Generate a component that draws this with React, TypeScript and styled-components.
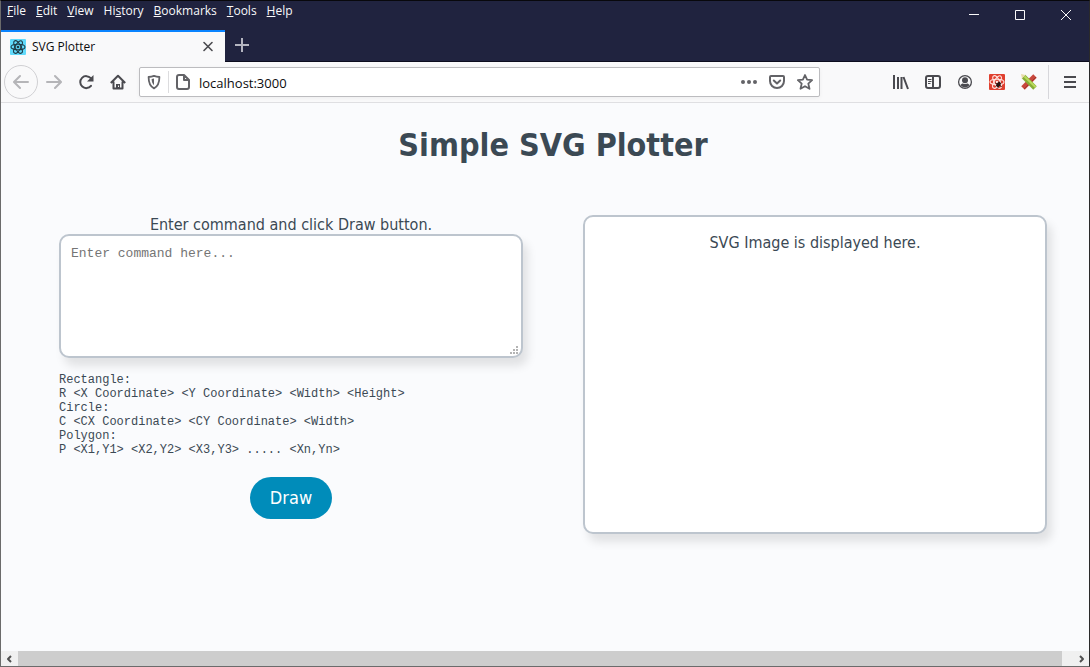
import React, { useState } from "react";
import styled, { createGlobalStyle } from "styled-components";

const ui = `"Open Sans", "Noto Sans", sans-serif`;
const body = `"DejaVu Sans Condensed", "DejaVu Sans", sans-serif`;
const mono = `"Liberation Mono", monospace`;

const GlobalStyle = createGlobalStyle`
  *, *::before, *::after { box-sizing: border-box; }
  body { margin: 0; background: #fafbfd; }
  button { border: 0; padding: 0; background: none; color: inherit; font: inherit; }
`;

const Window = styled.div`
  display: flex;
  flex-direction: column;
  min-height: 100vh;
  border: 1px solid #6b6b6b;
  border-top-color: #08080c;
  border-right-color: #2a2a2a;
  background: #fafbfd;
`;

const TitleBar = styled.header`
  display: flex;
  justify-content: space-between;
  align-items: flex-start;
  height: 29px;
  background: #20233f;
  color: #f9f9fa;
`;

const MenuBar = styled.nav`
  display: flex;
  gap: 10px;
  padding: 2px 6px 0;
`;

const MenuButton = styled.button`
  font: 12px/16px ${ui};
  u { text-underline-offset: 1px; }
`;

const WindowControls = styled.div`
  display: flex;
`;

const WindowButton = styled.button`
  display: grid;
  place-items: center;
  width: 46px;
  height: 28px;
`;

const TabStrip = styled.div`
  display: flex;
  height: 32px;
  background: #20233f;
  border-bottom: 1px solid #0c0c1e;
`;

const Tab = styled.div`
  display: flex;
  align-items: center;
  gap: 6px;
  width: 224px;
  margin-bottom: -1px;
  padding: 0 9px;
  border-top: 2px solid #0a84ff;
  background: #f9f9fa;
  font: 12px/16px ${ui};
  color: #0c0c0d;
`;

const TabTitle = styled.span`
  flex: 1;
`;

const SmallButton = styled.button`
  display: grid;
  place-items: center;
  width: 16px;
  height: 16px;
  color: #4a4a4f;
`;

const NewTab = styled.button`
  display: grid;
  place-items: center;
  width: 34px;
  height: 29px;
  color: #b4b5c0;
`;

const Toolbar = styled.div`
  display: flex;
  align-items: center;
  height: 41px;
  padding: 0 3px;
  border-bottom: 1px solid #dfdfe2;
  background: #f9f9fa;
`;

const ToolButton = styled.button<{ $muted?: boolean }>`
  display: grid;
  place-items: center;
  width: 32px;
  height: 32px;
  color: ${(p) => (p.$muted ? "#b5b5b8" : "#4a4a4f")};
`;

const BackButton = styled(ToolButton)`
  width: 34px;
  height: 34px;
  border: 1px solid #d0d0d3;
  border-radius: 50%;
`;

const AddressBar = styled.div`
  display: flex;
  align-items: center;
  flex: 1;
  height: 30px;
  margin: 0 65px 0 5px;
  border: 1px solid #bcbcbf;
  border-radius: 2px;
  background: #fff;
  color: #636367;
  box-shadow: 0 1px 4px rgba(0, 0, 0, 0.05);
`;

const AddressButton = styled.button`
  display: grid;
  place-items: center;
  width: 28px;
  height: 28px;
`;

const AddressDivider = styled.span`
  width: 1px;
  height: 22px;
  background: #dcdcde;
`;

const AddressInput = styled.input`
  flex: 1;
  min-width: 0;
  padding: 2px 2px 0;
  border: 0;
  outline: 0;
  background: none;
  font: 13px/20px ${ui};
  color: #0c0c0d;
`;

const ToolbarDivider = styled.span`
  width: 1px;
  height: 34px;
  margin: 0 5px 0 3px;
  background: #d7d7db;
`;

const Page = styled.main`
  flex: 1;
  padding: 22px 42px 40px 58px;
  font: 16px/19px ${body};
  color: #3b4954;
  text-align: center;
`;

const Title = styled.h1`
  margin: 0 0 50px;
  font-size: 32px;
  line-height: 40px;
`;

const Columns = styled.div`
  display: grid;
  grid-template-columns: 1fr 1fr;
  gap: 60px;
`;

const CommandForm = styled.form`
  display: flex;
  flex-direction: column;
  align-items: center;
`;

const dot = "linear-gradient(#b4b4b4, #b4b4b4)";

const CommandInput = styled.textarea`
  display: block;
  width: 100%;
  height: 124px;
  padding: 10px;
  border: 2px solid #bdc5ce;
  border-radius: 10px;
  outline: 0;
  background: #fff;
  box-shadow: 5px 8px 10px rgba(0, 0, 0, 0.1);
  font: 13px/15px ${mono};
  color: #3b4954;
  &::placeholder { color: #757575; opacity: 1; }
  &::-webkit-resizer {
    background-image: ${Array(6).fill(dot).join(", ")};
    background-repeat: no-repeat;
    background-size: 2px 2px;
    background-position: 10px 5px, 7px 8px, 10px 8px, 4px 11px, 7px 11px, 10px 11px;
  }
`;

const Help = styled.pre`
  align-self: flex-start;
  margin: 15px 0 20px;
  font: 12px/14px ${mono};
  text-align: left;
`;

const DrawButton = styled.button`
  padding: 10px 20px;
  border-radius: 21px;
  background: #008cba;
  color: #fff;
  font: 18px/22px ${body};
`;

const Preview = styled.section`
  min-height: 319px;
  padding: 16px;
  border: 2px solid #bdc5ce;
  border-radius: 10px;
  background: #fff;
  box-shadow: 5px 8px 10px rgba(0, 0, 0, 0.1);
`;

const Scrollbar = styled.div`
  display: flex;
  height: 15px;
  background: #f0f0f0;
`;

const ScrollButton = styled.button<{ $end?: boolean }>`
  display: grid;
  place-items: center;
  width: ${(p) => (p.$end ? 27 : 17)}px;
  padding-left: ${(p) => (p.$end ? 10 : 0)}px;
  background: #f0f0f0;
  color: #505050;
`;

const ScrollThumb = styled.div`
  flex: 1;
  background: #cdcdcd;
`;

type IconProps = { children: React.ReactNode; size?: number; w?: number; sharp?: boolean };
const Icon = ({ children, size = 16, w = 2, sharp }: IconProps) => (
  <svg width={size} height={size} viewBox={`0 0 ${size} ${size}`} fill="none" stroke="currentColor" strokeWidth={w}
    strokeLinecap={sharp ? "butt" : "round"} strokeLinejoin="round" aria-hidden="true">
    {children}
  </svg>
);

const Atom = ({ bg, fg }: { bg: string; fg: string }) => (
  <>
    <rect width="16" height="16" rx="1" fill={bg} stroke="none" />
    <g stroke={fg} strokeWidth="1.1" fill="none">
      <ellipse cx="8" cy="8" rx="7" ry="2.8" />
      <ellipse cx="8" cy="8" rx="7" ry="2.8" transform="rotate(60 8 8)" />
      <ellipse cx="8" cy="8" rx="7" ry="2.8" transform="rotate(120 8 8)" />
    </g>
    <circle cx="8" cy="8" r="1.3" fill={fg} stroke="none" />
  </>
);

const menus: [string, string, string][] = [
  ["", "F", "ile"], ["", "E", "dit"], ["", "V", "iew"], ["Hi", "s", "tory"],
  ["", "B", "ookmarks"], ["", "T", "ools"], ["", "H", "elp"],
];

const helpText = `Rectangle:
R <X Coordinate> <Y Coordinate> <Width> <Height>
Circle:
C <CX Coordinate> <CY Coordinate> <Width>
Polygon:
P <X1,Y1> <X2,Y2> <X3,Y3> ..... <Xn,Yn>`;

export default function App() {
  const [command, setCommand] = useState("");
  const [url, setUrl] = useState("localhost:3000");
  return (
    <Window>
      <GlobalStyle />
      <TitleBar>
        <MenuBar>
          {menus.map(([a, k, b]) => (
            <MenuButton key={a + k + b}>{a}<u>{k}</u>{b}</MenuButton>
          ))}
        </MenuBar>
        <WindowControls>
          <WindowButton aria-label="Minimize"><Icon size={10} w={1} sharp><path d="M0 4.5h10" /></Icon></WindowButton>
          <WindowButton aria-label="Maximize"><Icon size={10} w={1} sharp><path d="M.5.5h9v9h-9z" /></Icon></WindowButton>
          <WindowButton aria-label="Close"><Icon size={10} w={1} sharp><path d="M0 0l10 10M10 0L0 10" /></Icon></WindowButton>
        </WindowControls>
      </TitleBar>
      <TabStrip>
        <Tab>
          <Icon><Atom bg="#61dafb" fg="#1f3b47" /></Icon>
          <TabTitle>SVG Plotter</TabTitle>
          <SmallButton aria-label="Close tab"><Icon w={1.6}><path d="M4 3.500l8 8M12 3.500l-8 8" /></Icon></SmallButton>
        </Tab>
        <NewTab aria-label="New tab"><Icon sharp><path d="M8 1v14M1 8h14" /></Icon></NewTab>
      </TabStrip>
      <Toolbar>
        <BackButton $muted aria-label="Back"><Icon><path d="M15 8H1.500M7 2L1 8l6 6" /></Icon></BackButton>
        <ToolButton $muted aria-label="Forward"><Icon><path d="M1 8h13.500M9 2l6 6-6 6" /></Icon></ToolButton>
        <ToolButton aria-label="Reload">
          <Icon><path d="M13 11.800A6 6 0 1 1 12.800 4.200" /><path d="M15.500 1v6.500H9z" fill="currentColor" stroke="none" /></Icon>
        </ToolButton>
        <ToolButton aria-label="Home">
          <Icon sharp><path d="M.8 9L8 1.800 15.200 9M3.500 7.500V14.500h9V7.500" /><path d="M6 15v-5h4v5z" fill="currentColor" stroke="none" /><path d="M8.500 11.500v1.500" stroke="#f9f9fa" strokeWidth="1" /></Icon>
        </ToolButton>
        <AddressBar>
          <AddressButton aria-label="Tracking protection">
            <Icon w={1.8}><path d="M8 1.800C6 2.600 4.300 2.900 2.600 3c0 5 .7 9 5.400 11.400C12.700 12 13.400 8 13.400 3 11.700 2.900 10 2.600 8 1.800z" /><path d="M8 4.500v6.800C6.400 9.800 5.800 8 5.600 5z" fill="currentColor" stroke="none" /></Icon>
          </AddressButton>
          <AddressDivider />
          <AddressButton aria-label="Site information">
            <Icon><path d="M4 1h5L14 6V13a2 2 0 0 1-2 2H4a2 2 0 0 1-2-2V3A2 2 0 0 1 4 1zM9 1.500V6h4.500" /></Icon>
          </AddressButton>
          <AddressInput aria-label="Address" value={url} onChange={(e) => setUrl(e.target.value)} />
          <AddressButton aria-label="Page actions">
            <Icon><g fill="currentColor" stroke="none"><circle cx="2" cy="8" r="2" /><circle cx="8" cy="8" r="2" /><circle cx="14" cy="8" r="2" /></g></Icon>
          </AddressButton>
          <AddressButton aria-label="Save to Pocket">
            <Icon><path d="M2 2h12a1 1 0 0 1 1 1v4a7 7 0 0 1-14 0V3a1 1 0 0 1 1-1z" /><path d="M4.800 6.500L8 9.500l3.200-3" /></Icon>
          </AddressButton>
          <AddressButton aria-label="Bookmark">
            <Icon w={1.8}><path d="M8 1l2.100 4.700 5 .5-3.800 3.400 1.200 5.200L8 12.200l-4.500 2.600 1.200-5.200L.9 6.200l5-.5z" /></Icon>
          </AddressButton>
        </AddressBar>
        <ToolButton aria-label="Library">
          <Icon sharp><path d="M1 1v14M5 3v12M8.500 3v12M10.500 3l4.500 12" /></Icon>
        </ToolButton>
        <ToolButton aria-label="Sidebars">
          <Icon sharp><rect x="1" y="2" width="14" height="12" rx="2" /><path d="M8 2v12" /><path d="M3 5.500h3.500M3 7.500h3.500M3 9.500h2.500" strokeWidth="1" /></Icon>
        </ToolButton>
        <ToolButton aria-label="Account">
          <Icon w={1.3}><circle cx="8" cy="8" r="6.400" /><g fill="currentColor" stroke="none"><circle cx="8" cy="6.300" r="3" /><path d="M3.500 11c1-1.200 2-1.500 2.500-1.500 1 .8 3 .8 4 0 .5 0 1.500.3 2.500 1.500a5.300 5.300 0 0 1-9 0z" /></g></Icon>
        </ToolButton>
        <ToolButton aria-label="React developer tools">
          <Icon><Atom bg="#e0402f" fg="#ffe4e0" /><g fill="#2a1512" stroke="#2a1512" strokeWidth="0.8"><ellipse cx="9.500" cy="10.500" rx="1.600" ry="2.400" transform="rotate(35 9.500 10.500)" /><path d="M6.500 9l6 3.500M7 12l5-3M9 14l1.500-6" /></g></Icon>
        </ToolButton>
        <ToolButton aria-label="Pencil extension">
          <Icon sharp><path d="M2 14L14 2" stroke="#c8473c" strokeWidth="5" /><path d="M3 15L15 3" stroke="#a13329" strokeWidth="1" /><path d="M2.500 2.500L14 14" stroke="#86ad35" strokeWidth="5" /><path d="M3.500 2.500L14.500 13" stroke="#b9da5c" strokeWidth="2" /><path d="M0 0l4.500 1L1 4.500z" fill="#e6dca8" stroke="none" /></Icon>
        </ToolButton>
        <ToolbarDivider />
        <ToolButton aria-label="Menu"><Icon sharp><path d="M2 3h12M2 8h12M2 13h12" /></Icon></ToolButton>
      </Toolbar>
      <Page>
        <Title>Simple SVG Plotter</Title>
        <Columns>
          <CommandForm onSubmit={(e) => e.preventDefault()}>
            <label htmlFor="command">Enter command and click Draw button.</label>
            <CommandInput id="command" placeholder="Enter command here..." value={command} onChange={(e) => setCommand(e.target.value)} />
            <Help>{helpText}</Help>
            <DrawButton type="submit">Draw</DrawButton>
          </CommandForm>
          <Preview>SVG Image is displayed here.</Preview>
        </Columns>
      </Page>
      <Scrollbar>
        <ScrollButton aria-label="Scroll left"><Icon size={8} sharp><path d="M5 1L2 4l3 3" /></Icon></ScrollButton>
        <ScrollThumb />
        <ScrollButton $end aria-label="Scroll right"><Icon size={8} sharp><path d="M3 1l3 3-3 3" /></Icon></ScrollButton>
      </Scrollbar>
    </Window>
  );
}
